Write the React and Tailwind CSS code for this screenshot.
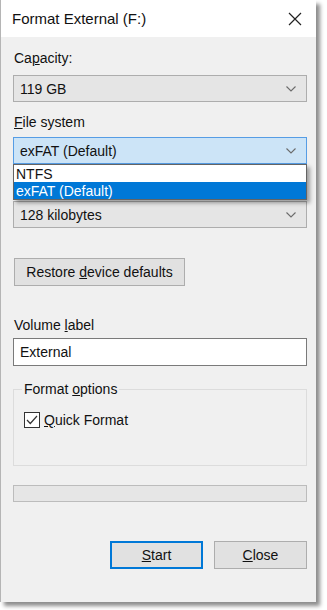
import React from 'react';

function Chevron() {
  return (
    <svg width="10" height="6" viewBox="0 0 10 6" className="shrink-0">
      <path d="M0.5 0.5 L5 5 L9.5 0.5" fill="none" stroke="#6b6b6b" strokeWidth="1.1" />
    </svg>
  );
}

function Combo({ value, active }) {
  return (
    <div
      className={`h-[27px] flex items-center justify-between pl-[6px] pr-[10px] border ${
        active ? 'bg-[#cce4f7] border-[#569de5]' : 'bg-[#e5e5e5] border-[#adadad]'
      }`}
    >
      <span>{value}</span>
      <Chevron />
    </div>
  );
}

function Btn({ children, primary, className = '' }) {
  return (
    <div
      className={`h-[28px] flex items-center justify-center bg-[#e1e1e1] ${
        primary ? 'border-2 border-[#0078d7]' : 'border border-[#adadad]'
      } ${className}`}
    >
      <span>{children}</span>
    </div>
  );
}

export default function App() {
  return (
    <div
      className="w-[327px] h-[610px] bg-white text-[14px] leading-[18px] text-[#111]"
      style={{ fontFamily: '"Liberation Sans", Arial, sans-serif' }}
    >
      <div className="w-[316px] h-[602px] bg-[#f0f0f0] border-l border-[#b5b5b5] shadow-[4px_4px_4px_rgba(0,0,0,0.45)] flex flex-col">
        {/* title bar */}
        <div className="h-[37px] bg-white flex items-center justify-between pl-[11px] pr-[14px]">
          <span className="text-[15px]">Format External (F:)</span>
          <svg width="14" height="14" viewBox="0 0 14 14">
            <path d="M1 1 L13 13 M13 1 L1 13" stroke="#222" strokeWidth="1.2" />
          </svg>
        </div>

        <div className="relative flex-1 pl-[12px] pr-[9px] pt-[12px]">
          <div className="pl-[1px]">
            Ca<span className="underline">p</span>acity:
          </div>
          <div className="mt-[8px]">
            <Combo value="119 GB" />
          </div>

          <div className="mt-[11px] pl-[1px]">
            <span className="underline">F</span>ile system
          </div>
          <div className="mt-[6px]">
            <Combo value="exFAT (Default)" active />
          </div>

          {/* allocation size label sits under the open list */}
          <div className="mt-[12px] h-[18px]" />
          <div className="mt-[7px]">
            <Combo value="128 kilobytes" />
          </div>

          {/* open dropdown list */}
          <div className="absolute left-[12px] right-[9px] top-[127px] border border-[#646464] bg-white shadow-[3px_3px_4px_rgba(0,0,0,0.35)]">
            <div className="h-[17px] flex items-center pl-[2px]">NTFS</div>
            <div className="h-[17px] flex items-center pl-[2px] bg-[#0078d7] text-white">exFAT (Default)</div>
          </div>

          <Btn className="mt-[30px] ml-[1px] w-[171px]">
            Restore <span className="underline">d</span>evice defaults
          </Btn>

          <div className="mt-[30px] pl-[1px]">
            Volume <span className="underline">l</span>abel
          </div>
          <div className="mt-[4px] h-[28px] bg-white border border-[#7a7a7a] flex items-center pl-[6px]">
            External
          </div>

          {/* group box */}
          <div className="relative mt-[23px] h-[77px] border border-[#dcdcdc]">
            <div className="absolute -top-[10px] left-[8px] px-[2px] bg-[#f0f0f0]">
              Format <span className="underline">o</span>ptions
            </div>
            <div className="absolute top-[21px] left-[10px] flex items-center gap-[4px]">
              <div className="w-[16px] h-[16px] bg-white border border-[#333] flex items-center justify-center">
                <svg width="12" height="10" viewBox="0 0 12 10">
                  <path d="M1 5 L4.3 8.5 L11 1" fill="none" stroke="#333" strokeWidth="1.2" />
                </svg>
              </div>
              <span>
                <span className="underline">Q</span>uick Format
              </span>
            </div>
          </div>

          {/* progress bar */}
          <div className="mt-[19px] h-[17px] bg-[#e6e6e6] border border-[#bcbcbc]" />

          <div className="mt-[39px] flex justify-end gap-[11px]">
            <Btn primary className="w-[93px]">
              <span className="underline">S</span>tart
            </Btn>
            <Btn className="w-[93px]">
              <span className="underline">C</span>lose
            </Btn>
          </div>
        </div>
      </div>
    </div>
  );
}
